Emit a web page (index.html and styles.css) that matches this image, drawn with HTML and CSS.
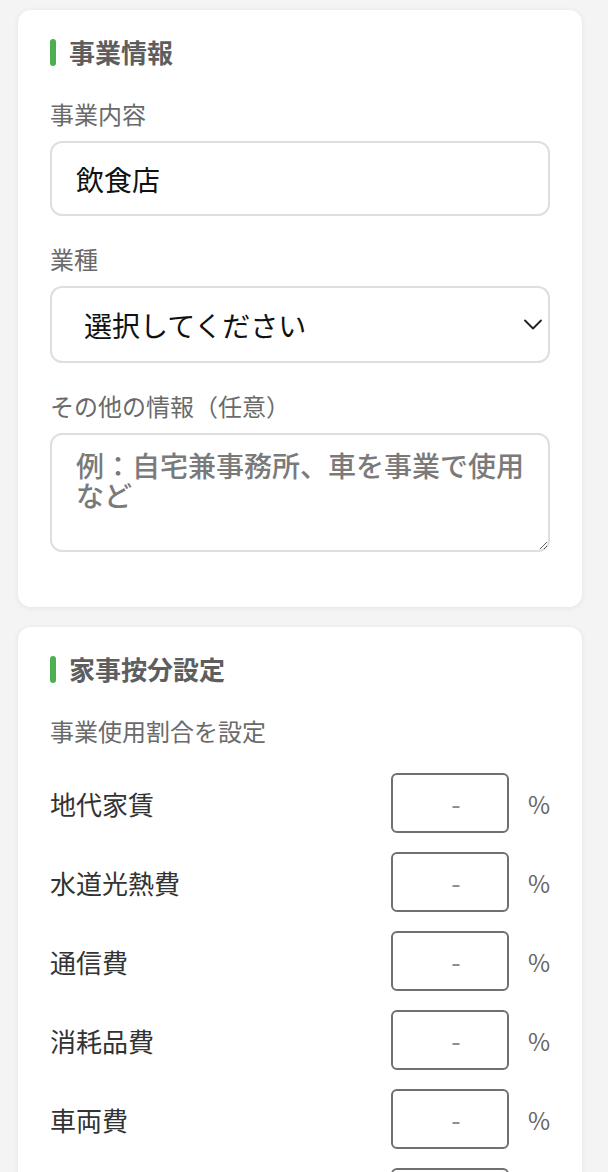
FILE: index.html
```html
<!DOCTYPE html>
<html lang="ja">
<head>
<meta charset="utf-8">
<title>事業情報</title>
<link rel="stylesheet" href="styles.css">
</head>
<body>
<main class="page">
  <section class="card">
    <h2 class="card-title">事業情報</h2>
    <div class="group">
      <label class="label" for="biz">事業内容</label>
      <input class="field" id="biz" type="text" value="飲食店">
    </div>
    <div class="group">
      <label class="label" for="kind">業種</label>
      <div class="select-wrap">
        <select class="field select" id="kind">
          <option>選択してください</option>
          <option>飲食業</option>
          <option>小売業</option>
        </select>
        <svg class="chevron" width="18" height="11" viewBox="0 0 18 11" aria-hidden="true">
          <polyline points="1,1.5 9,9.5 17,1.5" fill="none" stroke="#222" stroke-width="1.8" stroke-linecap="round" stroke-linejoin="round"/>
        </svg>
      </div>
    </div>
    <div class="group">
      <label class="label" for="other">その他の情報（任意）</label>
      <textarea class="field area" id="other" placeholder="例：自宅兼事務所、車を事業で使用など"></textarea>
    </div>
  </section>

  <section class="card">
    <h2 class="card-title">家事按分設定</h2>
    <p class="label desc">事業使用割合を設定</p>
    <div class="rows">
      <div class="row"><span class="row-label">地代家賃</span><input class="pct" type="text" placeholder="-"><span class="unit">%</span></div>
      <div class="row"><span class="row-label">水道光熱費</span><input class="pct" type="text" placeholder="-"><span class="unit">%</span></div>
      <div class="row"><span class="row-label">通信費</span><input class="pct" type="text" placeholder="-"><span class="unit">%</span></div>
      <div class="row"><span class="row-label">消耗品費</span><input class="pct" type="text" placeholder="-"><span class="unit">%</span></div>
      <div class="row"><span class="row-label">車両費</span><input class="pct" type="text" placeholder="-"><span class="unit">%</span></div>
      <div class="row"><span class="row-label">減価償却費</span><input class="pct" type="text" placeholder="-"><span class="unit">%</span></div>
      <div class="row"><span class="row-label">その他</span><input class="pct" type="text" placeholder="-"><span class="unit">%</span></div>
    </div>
  </section>
</main>
</body>
</html>
```

FILE: styles.css
```css
* { box-sizing: border-box; }

html, body {
  margin: 0;
  padding: 0;
  background: #f4f4f4;
  font-family: "Noto Sans CJK JP", "Noto Sans", sans-serif;
}

.page {
  padding: 10px 26px 0 18px;
}

.card {
  background: #fff;
  border-radius: 13px;
  box-shadow: 0 1px 6px rgba(0, 0, 0, 0.07);
  padding: 25px 32px 30px;
  margin-bottom: 20px;
}

.card-title {
  display: flex;
  align-items: center;
  margin: 0 0 27px;
  font-size: 26px;
  line-height: 34px;
  font-weight: 700;
  color: #5e5e5e;
}

.card-title::before {
  content: "";
  width: 6px;
  height: 27px;
  border-radius: 3px;
  background: #4caf50;
  margin-right: 13px;
}

.group {
  margin-bottom: 25px;
}

.label {
  display: block;
  margin: 0 0 9px;
  font-size: 24px;
  line-height: 36px;
  color: #6a6a6a;
}

.desc {
  margin-bottom: 24px;
}

.field {
  display: block;
  width: 100%;
  border: 2px solid #dedede;
  border-radius: 12px;
  background: #fff;
  font-family: inherit;
  font-size: 28px;
  color: #111;
  outline: none;
}

input.field {
  height: 75px;
  padding: 0 24px;
}

.select-wrap {
  position: relative;
}

.select {
  height: 77px;
  padding: 0 50px 0 32px;
  -webkit-appearance: none;
  appearance: none;
}

.chevron {
  position: absolute;
  right: 8px;
  top: 33px;
  pointer-events: none;
}

.area {
  height: 119px;
  padding: 15px 18px 15px 24px;
  line-height: 30px;
  resize: both;
}

.area::placeholder {
  color: #7a7a7a;
  font-weight: 500;
}

.rows {
  display: flex;
  flex-direction: column;
  gap: 19px;
}

.row {
  display: flex;
  align-items: center;
  height: 60px;
}

.row-label {
  flex: 1;
  font-size: 26px;
  color: #333;
}

.pct {
  width: 118px;
  height: 60px;
  border: 2px solid #707070;
  border-radius: 6px;
  padding: 0 0 0 12px;
  text-align: center;
  font-family: inherit;
  font-size: 27px;
  color: #333;
  background: #fff;
  outline: none;
}

.pct::placeholder {
  color: #8a8a8a;
}

.unit {
  margin-left: 19px;
  font-size: 24px;
  color: #666;
}
```
